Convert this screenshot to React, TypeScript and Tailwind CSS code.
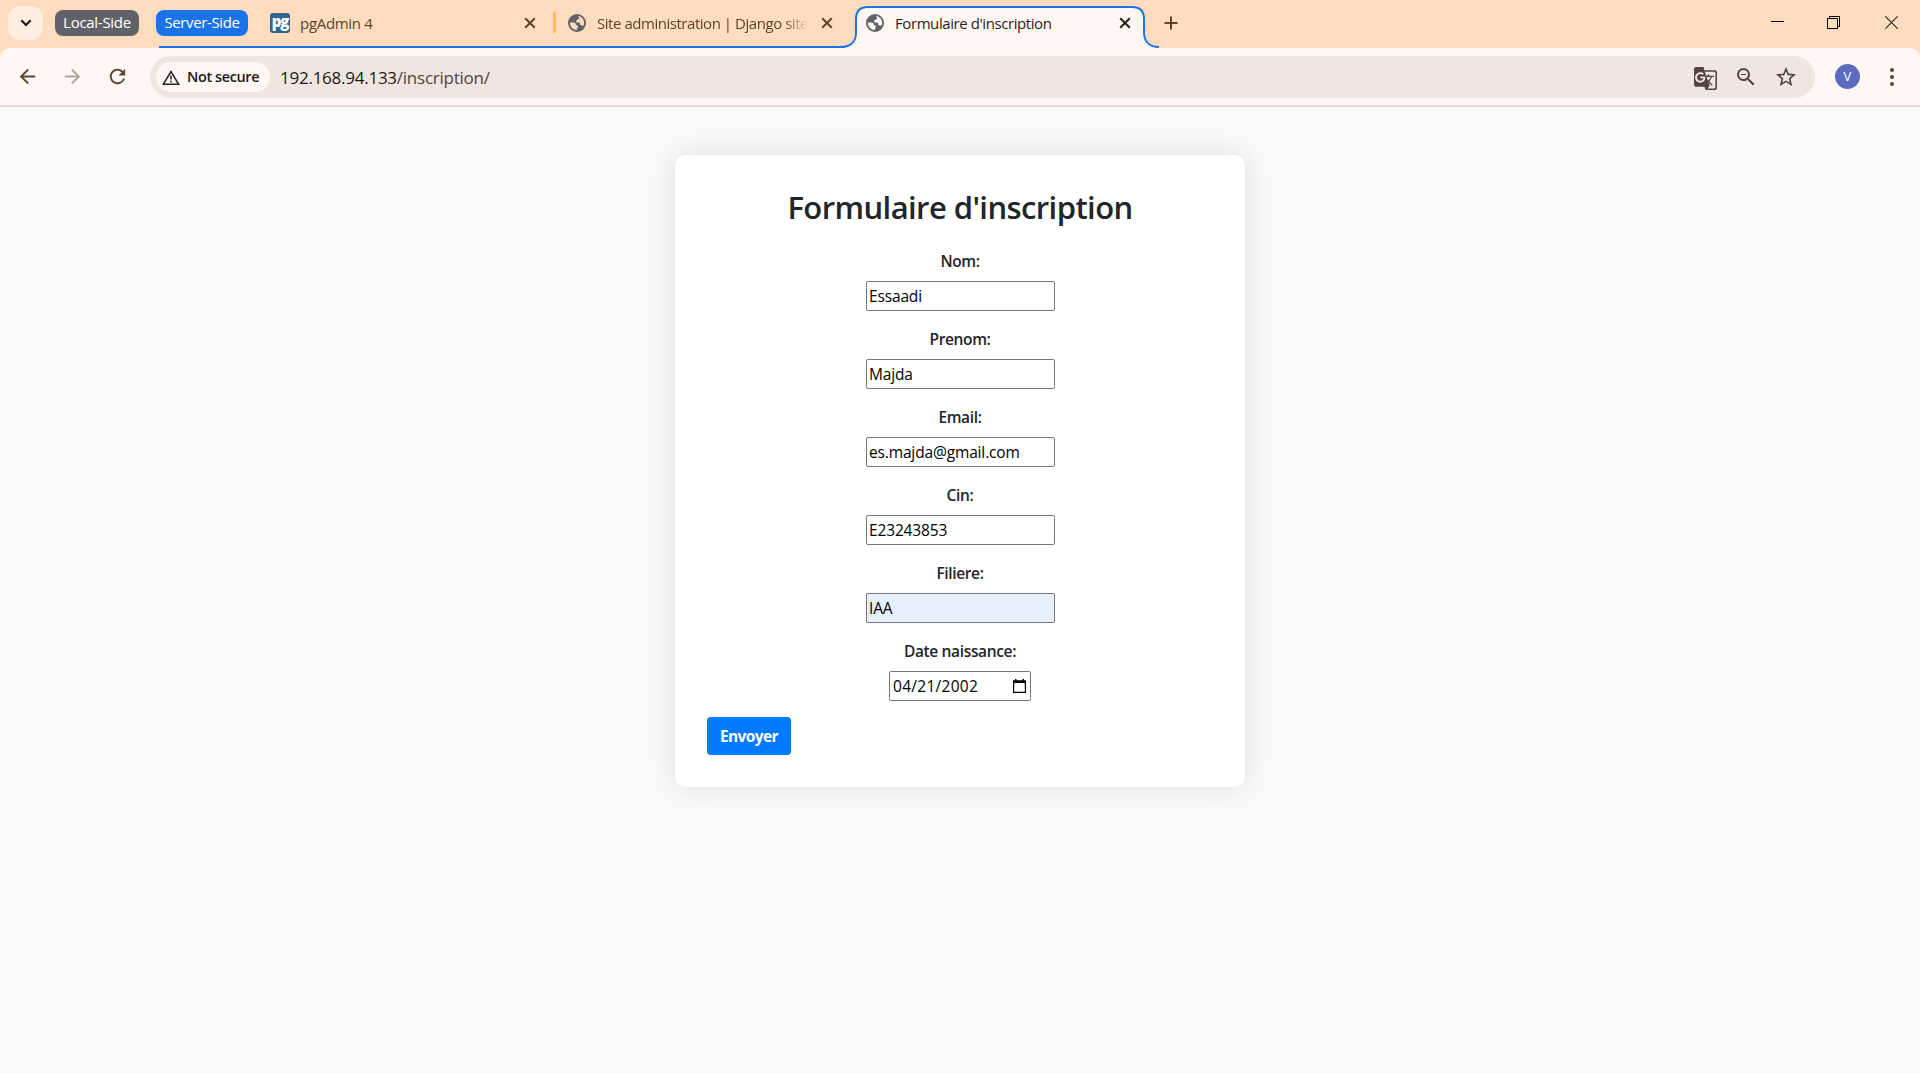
import type { ReactNode } from "react";
import { MdGTranslate, MdZoomOut, MdStarBorder, MdArrowBack, MdArrowForward, MdRefresh } from "react-icons/md";

function Cross({ className }: { className: string }) {
  return (
    <svg viewBox="0 0 12 12" className={className} fill="none" stroke="currentColor" strokeWidth="2">
      <path d="M1.2 1.2 10.8 10.8M10.8 1.2 1.2 10.8" />
    </svg>
  );
}

function Globe({ className }: { className: string }) {
  return (
    <svg viewBox="0 0 18 18" className={className}>
      <circle cx="9" cy="9" r="9" fill="#5f6368" />
      <path
        d="M10.2 2.1C13.6 2.5 16.1 5.4 16.1 9c0 .8-.1 1.5-.3 2.1C15 12 13.6 11.8 12.7 11c-.8-.7-.4-1.7-1.2-2.2-.9-.5-2.5.2-3.200-.7-.6-.8.1-1.9.8-2.4.8-.5 1.9-.2 2-1.2.1-.8-1-1.2-.9-2.4Z"
        fill="currentColor"
      />
      <path
        d="M1.9 8.6H5.5c1.5 0 2.2.9 2.3 1.900.1 1 1.3.7 1.9 1.5.6.9-.3 1.7-.5 2.3-.1.6-.2 1.2-.2 1.8C5 16.1 1.8 12.9 1.9 8.6Z"
        fill="currentColor"
      />
    </svg>
  );
}

function Chevron() {
  return (
    <svg viewBox="0 0 12 8" className="h-2 w-3" fill="none" stroke="#1f1b16" strokeWidth="2.2">
      <path d="M1.3 1.3 6 6 10.7 1.3" />
    </svg>
  );
}

function Warning() {
  return (
    <svg viewBox="0 0 18 15" className="h-[15px] w-[18px] shrink-0" fill="none" stroke="#2b2320" strokeWidth="1.6">
      <path d="M9 1.6 16.6 14.2H1.4Z" />
      <path d="M9 5.6V9.6M9 10.8V12.5" />
    </svg>
  );
}

function ActiveTabShape() {
  return (
    <svg viewBox="0 0 320 42" className="absolute top-0 -left-[18px] h-[42px] w-[320px]">
      <path
        d="M0 41H1C11 41 17 36 17 27V13Q17 1 29 1H293Q305 1 305 13V26C305 36 311 41 320 41V42H0Z"
        fill="#fff7f4"
      />
      <path
        d="M0 41H1C11 41 17 36 17 27V13Q17 1 29 1H293Q305 1 305 13V26C305 36 311 41 320 41"
        fill="none"
        stroke="#1a73e8"
        strokeWidth="2"
      />
    </svg>
  );
}

function TabStrip() {
  return (
    <header className="flex h-12 bg-[#fedcbd] text-[15px]">
      <div className="mt-1.5 ml-2 flex h-[34px] w-[35px] items-center justify-center rounded-xl bg-[#ffede0]">
        <Chevron />
      </div>
      <div className="mt-2.5 ml-3 flex h-[26px] w-[84px] items-center justify-center rounded-lg bg-[#5f6368] pb-0.5 tracking-[-0.28px] text-white">
        Local-Side
      </div>
      <div className="mt-2.5 ml-[17px] flex h-[26px] w-[92px] items-center justify-center rounded-lg bg-[#1a73e8] pb-0.5 tracking-[-0.38px] text-white">
        Server-Side
      </div>
      <div className="relative -ml-[89px] flex w-[682px] items-start border-b-2 border-[#1a73e8] pl-[111px] text-[#5c4428]">
        <div className="mt-[13px] flex h-5 w-5 items-center justify-center rounded-[3px] bg-[#326690] pb-1 text-[15px] leading-none font-extrabold tracking-[-1px] text-white">
          pg
        </div>
        <span className="mt-[11px] ml-2.5 w-[223px] leading-6 tracking-[-0.3px]">pgAdmin 4</span>
        <Cross className="mt-[17px] ml-[1px] h-3 w-3" />
        <div className="mt-3 ml-[17px] h-[21px] w-[3px] rounded-sm bg-[#ffb866]" />
        <Globe className="mt-3.5 ml-3 h-[18px] w-[18px] shrink-0 text-[#fedcbd]" />
        <span className="mt-[11px] ml-[11px] w-[211px] leading-6 tracking-[-0.46px] whitespace-nowrap [mask-image:linear-gradient(to_right,black_88%,transparent)]">
          Site administration | Django site
        </span>
        <Cross className="mt-[17px] ml-[13px] h-3 w-3 shrink-0" />
      </div>
      <div className="relative mt-1.5 ml-4 flex w-[288px] items-start text-[#2b1d14]">
        <ActiveTabShape />
        <Globe className="relative mt-2 ml-[9px] h-[18px] w-[18px] text-[#fff7f4]" />
        <span className="relative mt-[5px] ml-[11px] w-[224px] leading-6 tracking-[-0.42px]">Formulaire d'inscription</span>
        <Cross className="relative mt-[11px] h-3 w-3" />
      </div>
      <svg viewBox="0 0 14 14" className="mt-4 ml-[19px] h-3.5 w-3.5" stroke="#5c4428" strokeWidth="2">
        <path d="M7 .5V13.5M.5 7H13.5" />
      </svg>
      <div className="mt-4 mr-[22px] ml-auto flex">
        <svg viewBox="0 0 13 13" className="h-[13px] w-[13px]" stroke="#000">
          <path d="M0 5.5H13" />
        </svg>
        <svg viewBox="0 0 13 13" className="ml-[43px] h-[13px] w-[13px]" fill="none" stroke="#000">
          <path d="M.5 2.5H10.5V12.5H.5ZM2.5 2.5V.5H12.5V10.5H10.5" />
        </svg>
        <svg viewBox="0 0 13 13" className="ml-[45px] h-[13px] w-[13px]" stroke="#30261c" strokeWidth="1.1">
          <path d="M.3.3 12.7 12.7M12.7.3.3 12.7" />
        </svg>
      </div>
    </header>
  );
}

function Toolbar() {
  return (
    <div className="bg-[#fedcbd]">
      <div className="flex h-[59px] items-start rounded-t-[10px] border-b-2 border-[#f3dccf] bg-[#fff7f4] text-[#5a4630]">
        <MdArrowBack className="mt-[17px] ml-4 h-[23px] w-[23px]" />
        <MdArrowForward className="mt-[17px] ml-[22px] h-[23px] w-[23px] text-[#b0a6a2]" />
        <MdRefresh className="mt-[17px] ml-[22px] h-[23px] w-[23px]" />
        <div className="mt-2 ml-[21px] flex h-[42px] w-[1665px] items-center rounded-full bg-[#efe6e2] pr-[17px] pl-1.5 text-[#51443d]">
          <div className="flex h-[30px] w-[114px] items-center gap-[7px] rounded-full bg-[#fff7f4] pl-1.5 text-[14.5px] font-semibold tracking-[-0.4px] whitespace-nowrap text-[#201a17]">
            <Warning />
            <span className="-mt-px">Not secure</span>
          </div>
          <span className="mt-0.5 ml-2.5 text-[17px] tracking-[-0.25px] text-[#201a17]">
            192.168.94.133<span className="text-[#51443d]">/inscription/</span>
          </span>
          <MdGTranslate className="mt-0.5 ml-auto h-[25px] w-[25px]" />
          <MdZoomOut className="ml-4 h-6 w-6" />
          <MdStarBorder className="ml-4 h-6 w-6" />
        </div>
        <div className="mt-4 ml-5 flex h-[25px] w-[25px] items-center justify-center rounded-full bg-[#5c6bc0] text-[13px] text-white">
          V
        </div>
        <div className="mt-5 ml-[30px] flex flex-col gap-[3px]">
          <i className="h-1 w-1 rounded-full bg-[#5a4630]" />
          <i className="h-1 w-1 rounded-full bg-[#5a4630]" />
          <i className="h-1 w-1 rounded-full bg-[#5a4630]" />
        </div>
      </div>
    </div>
  );
}

function Field({ label, children }: { label: string; children: ReactNode }) {
  return (
    <div className="flex h-[78px] flex-col items-center">
      <label className="mb-2 h-6 text-[15.5px] leading-6 font-semibold tracking-[-0.35px] text-[#212529]">{label}</label>
      {children}
    </div>
  );
}

const fields = [
  { label: "Nom:", value: "Essaadi", box: "bg-white" },
  { label: "Prenom:", value: "Majda", box: "bg-white" },
  { label: "Email:", value: "es.majda@gmail.com", box: "bg-white" },
  { label: "Cin:", value: "E23243853", box: "bg-white" },
  { label: "Filiere:", value: "IAA", box: "bg-[#e8f0fe]" },
];

function RegistrationForm() {
  return (
    <form className="mx-auto mt-12 h-[632px] w-[570px] rounded-[10px] bg-white px-8 pt-8 shadow-[0_0_30px_rgba(0,0,0,0.1)]">
      <h1 className="mb-[22px] h-10 text-center text-[31px] leading-10 font-semibold tracking-[-0.58px] text-[#212529]">
        Formulaire d'inscription
      </h1>
      {fields.map((f) => (
        <Field key={f.label} label={f.label}>
          <input
            defaultValue={f.value}
            className={`ml-px h-[30px] w-[189px] rounded-xs border border-[#767676] px-0.5 text-[15.5px] tracking-[-0.15px] text-black ${f.box}`}
          />
        </Field>
      ))}
      <Field label="Date naissance:">
        <div className="flex h-[30px] w-[142px] items-center justify-between rounded-xs border border-[#767676] pr-1 pl-[3px] text-[15.5px] tracking-[0.28px] text-black">
          <span className="mt-px">04/21/2002</span>
          <svg viewBox="0 0 13 14" className="mb-px h-3.5 w-[13px]">
            <path d="M.6 3V13.3H12.4V3" fill="none" stroke="#000" strokeWidth="1.2" />
            <path d="M0 1.3H2V0H3.5V1.3H9.5V0H11V1.3H13V4H0Z" />
          </svg>
        </div>
      </Field>
      <button
        type="button"
        className="h-[38px] w-[84px] rounded-[4px] bg-[#007bff] pt-px text-[15.5px] font-bold tracking-[-0.6px] text-white"
      >
        Envoyer
      </button>
    </form>
  );
}

export default function App() {
  return (
    <div className="flex h-[1073px] w-[1920px] flex-col overflow-hidden bg-[#f8f9fb] font-['Open_Sans','Noto_Sans',sans-serif]">
      <TabStrip />
      <Toolbar />
      <RegistrationForm />
    </div>
  );
}
